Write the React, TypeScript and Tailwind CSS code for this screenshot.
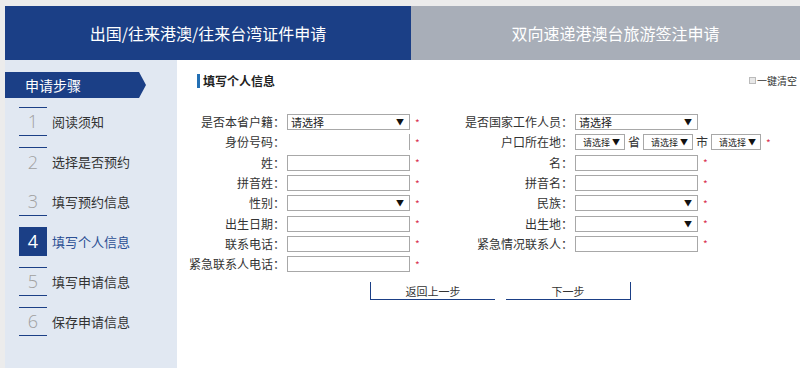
import React from "react";

const font = { fontFamily: '"Noto Sans CJK SC", "Noto Sans", sans-serif' };

function Sel({ w, text, small, className = "" }: { w: string; text?: string; small?: boolean; className?: string }) {
  return (
    <div
      className={`${w} ${className} h-[16px] border border-[#a8a8a8] bg-white flex items-center justify-between ${small ? "pl-[7px] pr-[4px] text-[9px]" : "pl-[3px] pr-[5px] text-[11px]"} leading-none text-[#222] whitespace-nowrap`}
    >
      <span>{text ?? ""}</span>
      <span className="text-[8px] text-[#111]">▼</span>
    </div>
  );
}

function Inp({ noBorder }: { noBorder?: boolean }) {
  return noBorder ? (
    <div className="w-[123px] h-[16px] border-r border-[#a8a8a8] bg-white" />
  ) : (
    <div className="w-[123px] h-[16px] border border-[#a8a8a8] bg-white" />
  );
}

function Star({ show = true }: { show?: boolean }) {
  return <span className={`ml-[5px] w-[6px] text-[10px] text-[#d9304f] ${show ? "" : "invisible"}`}>*</span>;
}

type Row = { l: string; lc: React.ReactNode; r?: string; rc?: React.ReactNode; rstar?: boolean };

export default function App() {
  const rows: Row[] = [
    { l: "是否本省户籍：", lc: <Sel w="w-[123px]" text="请选择" />, r: "是否国家工作人员：", rc: <Sel w="w-[123px]" text="请选择" />, rstar: false },
    {
      l: "身份号码：",
      lc: <Inp noBorder />,
      r: "户口所在地：",
      rc: (
        <div className="flex items-center text-[12px] text-[#333]">
          <Sel w="w-[50px]" text="请选择" small />
          <span className="mx-[3px]">省</span>
          <Sel w="w-[50px]" text="请选择" small />
          <span className="mx-[3px]">市</span>
          <Sel w="w-[50px]" text="请选择" small />
        </div>
      ),
    },
    { l: "姓：", lc: <Inp />, r: "名：", rc: <Inp /> },
    { l: "拼音姓：", lc: <Inp />, r: "拼音名：", rc: <Inp /> },
    { l: "性别：", lc: <Sel w="w-[123px]" />, r: "民族：", rc: <Sel w="w-[123px]" /> },
    { l: "出生日期：", lc: <Inp />, r: "出生地：", rc: <Sel w="w-[123px]" /> },
    { l: "联系电话：", lc: <Inp />, r: "紧急情况联系人：", rc: <Inp /> },
    { l: "紧急联系人电话：", lc: <Inp /> },
  ];

  const steps = [
    { n: "1", t: "阅读须知", top: true, bot: true },
    { n: "2", t: "选择是否预约", top: true, bot: false },
    { n: "3", t: "填写预约信息", top: false, bot: true },
    { n: "4", t: "填写个人信息", active: true },
    { n: "5", t: "填写申请信息", top: true, bot: true },
    { n: "6", t: "保存申请信息", top: true, bot: true },
  ];

  return (
    <div className="w-[800px] h-[368px] bg-[#ececec] overflow-hidden pt-[6px] pl-[5px] flex flex-col" style={font}>
      {/* header */}
      <div className="flex h-[54px] shrink-0">
        <div className="w-[406px] bg-[#1b3f86] flex items-center justify-center text-white text-[16px]">
          出国/往来港澳/往来台湾证件申请
        </div>
        <div className="flex-1 bg-[#a8aeb8] flex items-center justify-center pl-[20px] text-white text-[16px]">
          双向速递港澳台旅游签注申请
        </div>
      </div>

      <div className="flex flex-1">
        {/* sidebar */}
        <div className="w-[172px] bg-[#e1e8f2] pt-[12px]">
          <div
            className="w-[141px] h-[26px] bg-[#1b3f86] text-white text-[14px] flex items-center pl-[20px]"
            style={{ clipPath: "polygon(0 0, 134px 0, 100% 50%, 134px 100%, 0 100%)" }}
          >
            申请步骤
          </div>
          <div className="mt-[9px] flex flex-col gap-[11px]">
            {steps.map((s) => (
              <div key={s.n} className="flex items-center h-[29px]">
                {s.active ? (
                  <div className="ml-[14px] w-[28px] h-[29px] bg-[#1b3f86] text-white text-[18px] flex items-center justify-center" style={{ fontFamily: '"Open Sans", sans-serif' }}>
                    {s.n}
                  </div>
                ) : (
                  <div
                    className={`ml-[14px] w-[28px] h-[29px] flex items-center justify-center text-[18px] text-[#a0a0a0] font-light ${s.top ? "border-t" : ""} ${s.bot ? "border-b" : ""} border-[#1b3f86]`}
                    style={{ fontFamily: '"Open Sans", sans-serif' }}
                  >
                    {s.n}
                  </div>
                )}
                <span className={`ml-[5px] text-[13px] ${s.active ? "text-[#2b4f94]" : "text-[#333]"}`}>{s.t}</span>
              </div>
            ))}
          </div>
        </div>

        {/* main */}
        <div className="flex-1 bg-white relative">
          <div className="flex items-center justify-between pt-[14px] pl-[20px] pr-[3px]">
            <div className="flex items-center h-[14px]">
              <div className="w-[3px] h-[14px] bg-[#2370b4]" />
              <span className="ml-[3px] text-[12px] font-bold text-[#222]">填写个人信息</span>
            </div>
            <div className="flex items-center text-[10px] text-[#333] -mt-[2px]">
              <div className="w-[7px] h-[7px] border border-[#bbb] bg-[#e8e8e8] mr-[1px]" />
              一键清空
            </div>
          </div>

          <div className="mt-[24px] flex flex-col">
            {rows.map((r, i) => (
              <div key={i} className="flex items-center h-[20.3px] text-[12px] text-[#333]">
                <div className="w-[108px] text-right whitespace-nowrap">{r.l}</div>
                <div className="ml-[2px]">{r.lc}</div>
                <Star />
                {r.r !== undefined && (
                  <>
                    <div className="w-[152px] text-right whitespace-nowrap">{r.r}</div>
                    <div className="ml-[2px]">{r.rc}</div>
                    <Star show={r.rstar !== false} />
                  </>
                )}
              </div>
            ))}
          </div>

          <div className="mt-[8px] flex pl-[193px] gap-[11px]">
            <div className="w-[125px] h-[18px] border-l border-b border-[#1b3f86] flex items-center justify-center text-[11px] text-[#333]">
              返回上一步
            </div>
            <div className="w-[125px] h-[18px] border-r border-b border-[#1b3f86] flex items-center justify-center text-[11px] text-[#333]">
              下一步
            </div>
          </div>
        </div>
      </div>
    </div>
  );
}
